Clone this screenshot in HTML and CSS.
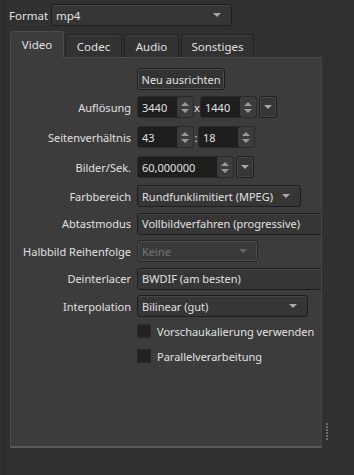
FILE: index.html
```html
<!DOCTYPE html>
<html lang="de">
<head>
<meta charset="utf-8">
<link rel="stylesheet" href="styles.css">
</head>
<body>
<div class="app">
  <div class="format-row">
    <span class="label">Format</span>
    <div class="combo format-combo"><span>mp4</span><i class="arrow"></i></div>
  </div>
  <div class="tabs">
    <div class="tab active">Video</div>
    <div class="tab">Codec</div>
    <div class="tab">Audio</div>
    <div class="tab">Sonstiges</div>
  </div>
  <div class="main">
    <div class="panel">
      <div class="form">
        <div class="row r-btn">
          <span class="lbl"></span>
          <div class="btn">Neu ausrichten</div>
        </div>
        <div class="row r1">
          <span class="lbl">Auflösung</span>
          <div class="fields">
            <div class="spin w57"><span class="val">3440</span><div class="spinbtns"><i class="up"></i><i class="down"></i></div></div>
            <span class="sep">x</span>
            <div class="spin w57"><span class="val">1440</span><div class="spinbtns"><i class="up"></i><i class="down"></i></div></div>
            <div class="dropbtn"><i class="arrow"></i></div>
          </div>
        </div>
        <div class="row r2">
          <span class="lbl">Seitenverhältnis</span>
          <div class="fields">
            <div class="spin w57"><span class="val">43</span><div class="spinbtns"><i class="up"></i><i class="down"></i></div></div>
            <span class="sep colon">:</span>
            <div class="spin w57"><span class="val">18</span><div class="spinbtns"><i class="up"></i><i class="down"></i></div></div>
          </div>
        </div>
        <div class="row r3">
          <span class="lbl">Bilder/Sek.</span>
          <div class="fields">
            <div class="spin w97"><span class="val">60,000000</span><div class="spinbtns"><i class="up"></i><i class="down"></i></div></div>
            <div class="dropbtn"><i class="arrow"></i></div>
          </div>
        </div>
        <div class="row r4">
          <span class="lbl">Farbbereich</span>
          <div class="combo w164"><span>Rundfunklimitiert (MPEG)</span><i class="arrow"></i></div>
        </div>
        <div class="row r5">
          <span class="lbl">Abtastmodus</span>
          <div class="combo wide"><span>Vollbildverfahren (progressive)</span><i class="arrow"></i></div>
        </div>
        <div class="row r6">
          <span class="lbl">Halbbild Reihenfolge</span>
          <div class="combo w121 disabled"><span>Keine</span><i class="arrow"></i></div>
        </div>
        <div class="row r7">
          <span class="lbl">Deinterlacer</span>
          <div class="combo wide"><span>BWDIF (am besten)</span><i class="arrow"></i></div>
        </div>
        <div class="row r8">
          <span class="lbl">Interpolation</span>
          <div class="combo w171"><span>Bilinear (gut)</span><i class="arrow"></i></div>
        </div>
        <div class="row check c1">
          <span class="lbl"></span>
          <label class="cb"><i class="box"></i><span>Vorschaukalierung verwenden</span></label>
        </div>
        <div class="row check c2">
          <span class="lbl"></span>
          <label class="cb"><i class="box"></i><span>Parallelverarbeitung</span></label>
        </div>
      </div>
    </div>
    <div class="grip">
      <i></i><i></i><i></i><i></i><i></i><i></i>
    </div>
  </div>
</div>
</body>
</html>
```
FILE: styles.css
```css
html, body {
  margin: 0;
  padding: 0;
  background: #303030;
  height: 100%;
}
body {
  font-family: "Noto Sans", "Open Sans", sans-serif;
  font-size: 11px;
  color: #e0e0e0;
  overflow: hidden;
}
.app {
  margin-left: 3px;
  border-left: 1px solid #262626;
  padding-left: 5px;
  padding-top: 4px;
  height: 100%;
  box-sizing: border-box;
}
.format-row {
  display: flex;
  align-items: center;
  height: 22px;
  gap: 3px;
  font-size: 11.5px;
}
.label {
  width: 39px;
}
.combo {
  position: relative;
  box-sizing: border-box;
  height: 22px;
  background: #363636;
  border: 1px solid #1e1e1e;
  border-radius: 3px;
  box-shadow: inset 0 1px 0 #454545;
  display: flex;
  align-items: center;
  padding-left: 4px;
  white-space: nowrap;
  flex: none;
}
.combo .arrow {
  position: absolute;
  right: 10px;
  top: 8px;
}
.arrow {
  display: block;
  width: 0;
  height: 0;
  border-left: 4px solid transparent;
  border-right: 4px solid transparent;
  border-top: 4px solid #a8a8a8;
}
.format-combo {
  width: 181px;
}
.tabs {
  display: flex;
  align-items: flex-end;
  margin-top: 5px;
  margin-left: 1px;
  height: 26px;
}
.tab {
  box-sizing: border-box;
  height: 23px;
  padding: 0 6px;
  display: flex;
  align-items: center;
  justify-content: center;
  background: #323232;
  border: 1px solid #222;
  border-bottom: none;
  border-radius: 3px 3px 0 0;
  box-shadow: inset 0 1px 0 #3e3e3e;
  margin-right: 2px;
  position: relative;
  font-size: 11.5px;
}
.tab:nth-child(1) { width: 54px; margin-right: 1px; }
.tab:nth-child(2) { width: 57px; }
.tab:nth-child(3) { width: 55px; }
.tab:nth-child(4) { width: 73px; }
.tab.active {
  height: 27px;
  background: #3c3c3c;
  border-color: #4b4b4b;
  box-shadow: none;
  margin-bottom: -1px;
  z-index: 2;
  padding-bottom: 2px;
}
.main {
  display: flex;
  margin-left: 1px;
}
.panel {
  width: 312px;
  height: 391px;
  box-sizing: border-box;
  background: #3c3c3c;
  border: 1px solid #4b4b4b;
  border-bottom: 2px solid #5a5a5a;
  border-right-color: #444;
  overflow: hidden;
}
.form {
  display: flex;
  flex-direction: column;
  gap: 5px;
  padding-top: 10px;
}
.row {
  display: flex;
  align-items: center;
  gap: 6px;
  height: 22px;
}
.lbl {
  width: 120px;
  text-align: right;
  flex: none;
  white-space: nowrap;
}
.r1 { margin-top: 1px; }
.r2 { margin-top: 3px; }
.r3 { margin-top: 3px; }
.r4 { margin-top: 2px; }
.r5, .r7 { height: 23px; }
.c1 { height: 20px; margin-top: -1px; }
.c2 { height: 20px; }
.btn {
  box-sizing: border-box;
  height: 22px;
  width: 88px;
  background: #333;
  border: 1px solid #1e1e1e;
  border-radius: 3px;
  box-shadow: inset 0 0 0 1px #4a4a4a;
  display: flex;
  align-items: center;
  justify-content: center;
  white-space: nowrap;
}
.fields {
  display: flex;
  align-items: center;
}
.spin {
  box-sizing: border-box;
  height: 22px;
  background: #1e1e1e;
  border: 1px solid #2a2a2a;
  border-radius: 3px;
  display: flex;
  align-items: center;
  justify-content: space-between;
  padding-left: 4px;
}
.w57 { width: 57px; }
.w97 { width: 97px; }
.spinbtns {
  width: 16px;
  height: 20px;
  background: #3c3c3c;
  border-radius: 2px;
  display: flex;
  flex-direction: column;
  justify-content: center;
  align-items: center;
  gap: 3px;
}
.spinbtns i {
  display: block;
  width: 0;
  height: 0;
  border-left: 4px solid transparent;
  border-right: 4px solid transparent;
}
.spinbtns .up { border-bottom: 4px solid #9a9a9a; }
.spinbtns .down { border-top: 4px solid #9a9a9a; }
.sep {
  width: 6px;
  text-align: center;
}
.sep.colon { width: 4px; }
.dropbtn {
  box-sizing: border-box;
  width: 18px;
  height: 22px;
  margin-left: 2px;
  background: #363636;
  border: 1px solid #1e1e1e;
  border-radius: 3px;
  box-shadow: inset 0 0 0 1px #474747;
  display: flex;
  align-items: center;
  justify-content: center;
}
.w164 { width: 164px; }
.w121 { width: 121px; }
.w171 { width: 171px; }
.wide { width: 230px; }
.combo.disabled {
  color: #747474;
  background: #3a3a3a;
  box-shadow: inset 0 0 0 1px #4a4a4a;
  border-color: #2a2a2a;
}
.combo.disabled .arrow { border-top-color: #666; }
.cb {
  display: flex;
  align-items: center;
  gap: 6px;
  white-space: nowrap;
}
.box {
  display: block;
  width: 14px;
  height: 14px;
  box-sizing: border-box;
  background: #222;
  border: 1px solid #2b2b2b;
}
.grip {
  align-self: flex-end;
  margin-bottom: 8px;
  margin-left: 4px;
  display: flex;
  flex-direction: column;
  gap: 1px;
}
.grip i {
  display: block;
  width: 2px;
  height: 2px;
  background: #6a6a6a;
}
```
